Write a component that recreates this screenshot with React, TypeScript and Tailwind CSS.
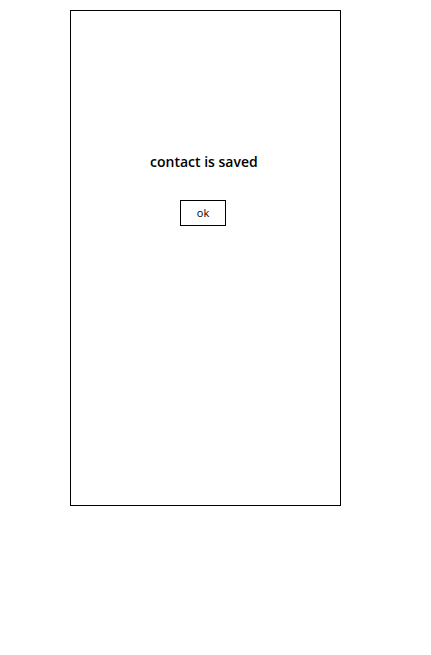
export default function App() {
  return (
    <div className="w-[431px] h-[655px] bg-white" style={{ fontFamily: '"Open Sans", sans-serif' }}>
      <div className="ml-[70px] mt-[10px] w-[271px] h-[496px] border border-black flex flex-col">
        <div className="mt-[141px] ml-[79px] text-[14px] font-semibold text-black leading-[19px]">contact is saved</div>
        <button className="mt-[29px] ml-[109px] w-[46px] h-[26px] border border-black text-[11px] text-black bg-white">ok</button>
      </div>
    </div>
  );
}
